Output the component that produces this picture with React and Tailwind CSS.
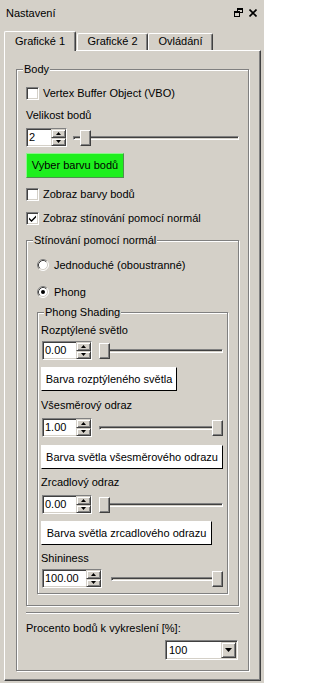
import React from "react";

const raised =
    "border border-t-white border-l-white border-r-[#404040] border-b-[#404040] shadow-[inset_-1px_-1px_0_#808080]";
const sunken =
    "border border-t-[#808080] border-l-[#808080] border-r-white border-b-white shadow-[inset_1px_1px_0_#404040,inset_-1px_-1px_0_#d4d0c8]";

const Group = ({ label, className, children }) => (
    <div
        className={`relative border border-[#808080] shadow-[inset_1px_1px_0_#fff,1px_1px_0_#fff] ${className}`}
    >
        <span className="absolute left-[6px] -top-[7px] bg-[#d4d0c8] px-[1px] leading-[13px]">
            {label}
        </span>
        {children}
    </div>
);

const Label = ({ children, className = "" }) => (
    <div className={`h-[14px] leading-[14px] ${className}`}>{children}</div>
);

const SpinBtn = ({ up }) => (
    <div className="flex-1 flex items-center justify-center bg-[#d4d0c8] border border-t-[#d4d0c8] border-l-[#d4d0c8] border-r-[#404040] border-b-[#404040] shadow-[inset_1px_1px_0_#fff,inset_-1px_-1px_0_#808080]">
        <svg width="5" height="3" viewBox="0 0 5 3">
            {up ? (
                <path d="M2.5 0 L5 3 L0 3Z" fill="#000" />
            ) : (
                <path d="M0 0 L5 0 L2.5 3Z" fill="#000" />
            )}
        </svg>
    </div>
);

const Spin = ({ value, className }) => (
    <div className={`flex h-[19px] bg-white ${sunken} ${className}`}>
        <span className="flex-1 flex items-center pl-[2px]">{value}</span>
        <div className="flex flex-col w-[15px]">
            <SpinBtn up />
            <SpinBtn />
        </div>
    </div>
);

const Slider = ({ className, thumb }) => (
    <div className={`relative flex items-center h-[19px] ${className}`}>
        <div className="w-full h-[4px] bg-[#d4d0c8] border border-t-[#808080] border-l-[#808080] border-r-white border-b-white shadow-[inset_1px_1px_0_#404040]" />
        <div
            className={`absolute top-[2px] h-[16px] w-[11px] bg-[#d4d0c8] ${raised} ${thumb}`}
        />
    </div>
);

const Check = ({ checked, children, className = "" }) => (
    <div className={`flex items-center h-[13px] ${className}`}>
        <div
            className={`w-[13px] h-[13px] shrink-0 bg-white flex items-center justify-center ${sunken}`}
        >
            {checked && (
                <svg width="7" height="7" viewBox="0 0 7 7">
                    <path d="M0 2.5 L2.5 5 L7 0.5 L7 2.5 L2.5 7 L0 4.5Z" fill="#000" />
                </svg>
            )}
        </div>
        <span className="ml-[4px]">{children}</span>
    </div>
);

const Radio = ({ checked, children, className = "" }) => (
    <div className={`flex items-center h-[12px] ${className}`}>
        <svg width="12" height="12" viewBox="0 0 12 12" className="shrink-0">
            <circle cx="6" cy="6" r="5" fill="#fff" />
            <path d="M2.11 9.89 A5.5 5.5 0 0 1 9.89 2.11" stroke="#808080" fill="none" />
            <path d="M9.89 2.11 A5.5 5.5 0 0 1 2.11 9.89" stroke="#fff" fill="none" />
            <path d="M2.82 9.18 A4.5 4.5 0 0 1 9.18 2.82" stroke="#404040" fill="none" />
            <path d="M9.18 2.82 A4.5 4.5 0 0 1 2.82 9.18" stroke="#d4d0c8" fill="none" />
            {checked && <circle cx="6" cy="6" r="2" fill="#000" />}
        </svg>
        <span className="ml-[5px]">{children}</span>
    </div>
);

const Btn = ({ children, className = "" }) => (
    <div
        className={`h-[24px] flex items-center justify-center bg-white border border-t-white border-l-white border-r-black border-b-black ${className}`}
    >
        {children}
    </div>
);

const App = () => {
    return (
        <div className="w-[264px] h-[683px] bg-[#d4d0c8] overflow-hidden font-['Liberation_Sans',Arial,sans-serif] text-[11px] leading-[13px] text-black">
            {/* title bar */}
            <div className="h-[31px] flex items-start justify-between pl-[6px] pr-[7px] pt-[7px]">
                <span>Nastavení</span>
                <div className="flex items-center gap-[6px] pt-[1px]">
                    <svg width="9" height="9" viewBox="0 0 9 9" shapeRendering="crispEdges">
                        <rect x="3.5" y="0.5" width="5" height="4" fill="none" stroke="#000" />
                        <line x1="3" y1="1.5" x2="9" y2="1.5" stroke="#000" />
                        <rect x="0.5" y="3.5" width="5" height="5" fill="#d4d0c8" stroke="#000" />
                        <line x1="0" y1="4.5" x2="6" y2="4.5" stroke="#000" />
                    </svg>
                    <svg width="8" height="8" viewBox="0 0 8 8">
                        <path d="M0.5 0.5 L7.5 7.5 M7.5 0.5 L0.5 7.5" stroke="#000" strokeWidth="1.6" />
                    </svg>
                </div>
            </div>

            {/* tabs */}
            <div className="flex items-end h-[19px] pl-[4px] relative z-10">
                <div className="w-[72px] h-[20px] -mb-[1px] bg-[#d4d0c8] border-t border-l border-r border-t-white border-l-white border-r-[#404040] shadow-[inset_-1px_0_0_#808080] rounded-t-[2px] flex justify-center pt-[3px]">
                    Grafické 1
                </div>
                <div className="ml-[1px] w-[71px] h-[17px] border-t border-l border-r border-t-white border-l-white border-r-[#404040] shadow-[inset_-1px_0_0_#808080] rounded-t-[2px] flex justify-center pt-[1px]">
                    Grafické 2
                </div>
                <div className="w-[65px] h-[17px] border-t border-l border-r border-t-white border-l-white border-r-[#404040] shadow-[inset_-1px_0_0_#808080] rounded-t-[2px] flex justify-center pt-[1px]">
                    Ovládání
                </div>
            </div>

            {/* tab page */}
            <div className="ml-[4px] w-[257px] h-[631px] border border-t-white border-l-white border-r-[#404040] border-b-[#404040] shadow-[inset_-1px_-1px_0_#808080] pl-[11px] pt-[18px]">
                <Group label="Body" className="w-[233px] pt-[17px] pl-[9px] pb-[10px]">
                    <Check>Vertex Buffer Object (VBO)</Check>
                    <Label className="mt-[8px]">Velikost bodů</Label>
                    <div className="flex mt-[6px]">
                        <Spin value="2" className="w-[41px]" />
                        <Slider className="ml-[6px] w-[166px]" thumb="left-[7px]" />
                    </div>
                    <div className="mt-[6px] w-[98px] h-[25px] flex items-center justify-center bg-[#1eef1e] border border-t-[#8cf58c] border-l-[#8cf58c] border-r-[#4f8f4f] border-b-[#4f8f4f]">
                        Vyber barvu bodů
                    </div>
                    <Check className="mt-[10px]">Zobraz barvy bodů</Check>
                    <Check checked className="mt-[11px]">
                        Zobraz stínování pomocí normál
                    </Check>

                    <Group
                        label="Stínování pomocí normál"
                        className="w-[213px] mt-[15px] pt-[18px] pl-[10px] pb-[11px]"
                    >
                        <Radio>Jednoduché (oboustranné)</Radio>
                        <Radio checked className="mt-[15px]">
                            Phong
                        </Radio>

                        <Group
                            label="Phong Shading"
                            className="w-[191px] mt-[14px] pt-[10px] pl-[3px] pb-[5px]"
                        >
                            <Label>Rozptýlené světlo</Label>
                            <div className="flex mt-[4px] ml-[1px]">
                                <Spin value="0.00" className="w-[50px]" />
                                <Slider className="ml-[7px] w-[124px]" thumb="left-0" />
                            </div>
                            <Btn className="mt-[7px] w-[136px]">Barva rozptýleného světla</Btn>

                            <Label className="mt-[7px]">Všesměrový odraz</Label>
                            <div className="flex mt-[6px] ml-[1px]">
                                <Spin value="1.00" className="w-[50px]" />
                                <Slider className="ml-[7px] w-[124px]" thumb="right-0" />
                            </div>
                            <Btn className="mt-[8px] w-[182px]">
                                Barva světla všesměrového odrazu
                            </Btn>

                            <Label className="mt-[6px]">Zrcadlový odraz</Label>
                            <div className="flex mt-[6px] ml-[1px]">
                                <Spin value="0.00" className="w-[50px]" />
                                <Slider className="ml-[7px] w-[124px]" thumb="left-0" />
                            </div>
                            <Btn className="mt-[7px] w-[171px]">
                                Barva světla zrcadlového odrazu
                            </Btn>

                            <Label className="mt-[6px]">Shininess</Label>
                            <div className="flex mt-[4px] ml-[1px]">
                                <Spin value="100.00" className="w-[60px]" />
                                <Slider className="ml-[9px] w-[112px]" thumb="right-0" />
                            </div>
                        </Group>
                    </Group>

                    <div className="mt-[6px] w-[213px] h-[2px] border-t border-b border-t-[#808080] border-b-white" />
                    <Label className="mt-[7px]">Procento bodů k vykreslení [%]:</Label>

                    {/* combo */}
                    <div className={`mt-[5px] ml-[139px] w-[73px] h-[20px] flex bg-white ${sunken}`}>
                        <span className="flex-1 flex items-center pl-[3px]">100</span>
                        <div className="w-[15px] my-[1px] mr-[1px] flex items-center justify-center bg-[#d4d0c8] border border-t-[#d4d0c8] border-l-[#d4d0c8] border-r-[#404040] border-b-[#404040] shadow-[inset_1px_1px_0_#fff,inset_-1px_-1px_0_#808080]">
                            <svg width="7" height="4" viewBox="0 0 7 4">
                                <path d="M0 0 L7 0 L3.5 4Z" fill="#000" />
                            </svg>
                        </div>
                    </div>
                </Group>
            </div>
        </div>
    );
};

export default App;
